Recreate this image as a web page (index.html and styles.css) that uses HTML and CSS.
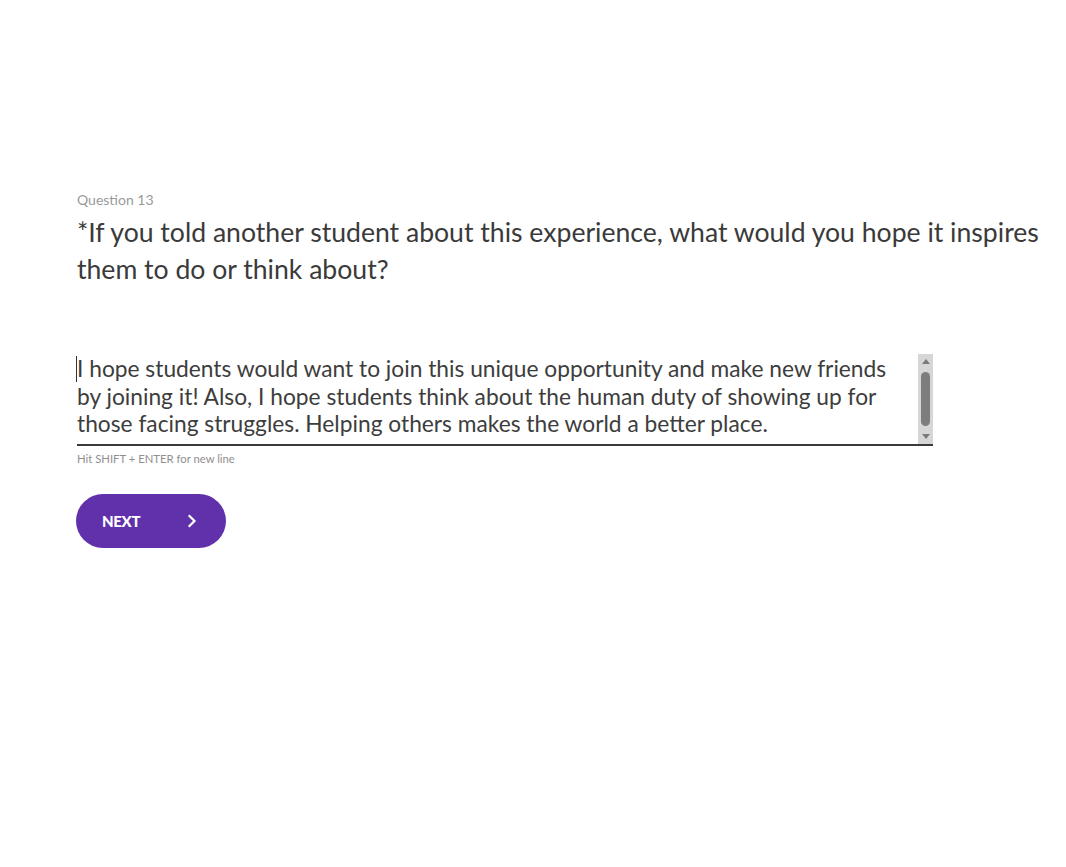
FILE: index.html
```html
<!DOCTYPE html>
<html>
<head>
<meta charset="utf-8">
<link rel="stylesheet" href="styles.css">
</head>
<body>
<main class="page">
  <section class="question">
    <div class="q-label">Question 13</div>
    <h1 class="q-title">*If you told another student about this experience, what would you hope it inspires them to do or think about?</h1>
    <div class="answer">
      <div class="answer-text"><span class="caret"></span>I hope students would want to join this unique opportunity and make new friends by joining it! Also, I hope students think about the human duty of showing up for those facing struggles. Helping others makes the world a better place.</div>
      <div class="scrollbar">
        <span class="arrow up"></span>
        <span class="thumb"></span>
        <span class="arrow down"></span>
      </div>
    </div>
    <div class="hint">Hit SHIFT + ENTER for new line</div>
    <button class="next">
      <span class="next-label">NEXT</span>
      <svg class="chev" width="10" height="14" viewBox="0 0 10 14"><path d="M2.5 2 L7.5 7 L2.5 12" fill="none" stroke="#fff" stroke-width="2.2" stroke-linecap="square"/></svg>
    </button>
  </section>
</main>
</body>
</html>
```

FILE: styles.css
```css
html, body {
  margin: 0;
  padding: 0;
  background: #fff;
}
body {
  font-family: "Lato", "Open Sans", sans-serif;
  color: #3d3d3d;
}
.page {
  padding: 190px 0 0 77px;
}
.question {
  width: 975px;
}
.q-label {
  font-size: 14px;
  line-height: 20px;
  color: #9a9a9a;
}
.q-title {
  margin: 4px 0 0 0;
  font-size: 26.6px;
  font-weight: 400;
  line-height: 37px;
  color: #3a3a3a;
}
.answer {
  margin-top: 66px;
  width: 856px;
  display: flex;
  border-bottom: 2px solid #3a3a3a;
  height: 90px;
}
.answer-text {
  flex: 1;
  font-size: 22.75px;
  line-height: 27.5px;
  color: #3d3d3d;
  padding-top: 1px;
  padding-right: 20px;
}
.caret {
  display: inline-block;
  width: 1px;
  height: 26px;
  background: #333;
  vertical-align: -5px;
  margin-left: -1px;
}
.scrollbar {
  width: 15px;
  background: #d6d6d6;
  display: flex;
  flex-direction: column;
  align-items: center;
  justify-content: space-between;
  padding: 5px 0 5px;
  box-sizing: border-box;
}
.arrow {
  width: 0;
  height: 0;
  border-left: 4px solid transparent;
  border-right: 4px solid transparent;
}
.arrow.up {
  border-bottom: 5px solid #7a7a7a;
}
.arrow.down {
  border-top: 5px solid #7a7a7a;
}
.thumb {
  width: 9px;
  height: 54px;
  background: #7d7d7d;
  border-radius: 5px;
}
.hint {
  margin-top: 6px;
  font-size: 11.3px;
  line-height: 14px;
  color: #8f8f8f;
}
.next {
  margin: 28px 0 0 -1px;
  width: 150px;
  height: 54px;
  border: none;
  border-radius: 27px;
  background: #6131ab;
  display: flex;
  align-items: center;
  justify-content: space-between;
  padding: 0 29px 0 26px;
  box-sizing: border-box;
  cursor: pointer;
}
.next-label {
  font-family: "Lato", sans-serif;
  font-weight: 900;
  font-size: 15px;
  color: #fff;
  letter-spacing: -0.3px;
}
.chev {
  display: block;
}
```
